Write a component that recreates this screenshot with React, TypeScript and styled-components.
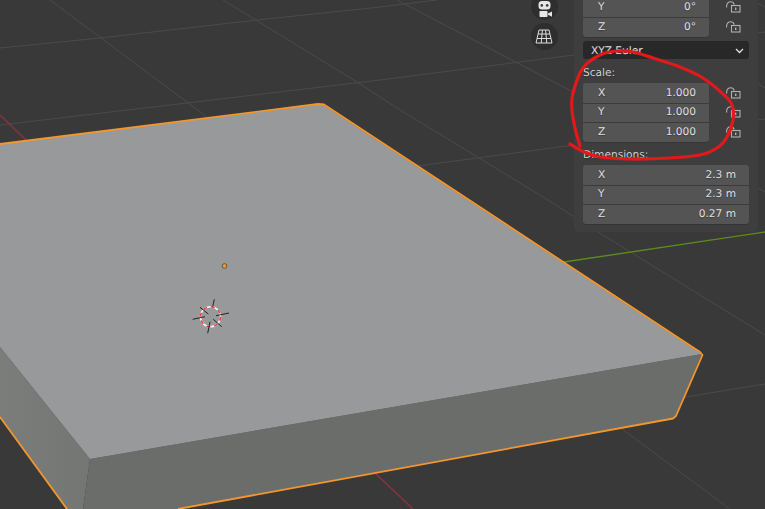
import React from "react";
import styled, { createGlobalStyle } from "styled-components";

const Global = createGlobalStyle`
  html, body { margin: 0; padding: 0; background: #393939; }
  #root { width: 765px; height: 509px; }
`;

const Viewport = styled.div`
  position: relative;
  width: 765px;
  height: 509px;
  overflow: hidden;
  background: #393939;
  font-family: "DejaVu Sans", sans-serif;
  font-size: 10.6px;
  text-rendering: geometricPrecision;
  color: #e0e0e0;
`;

const Scene = styled.svg`
  position: absolute;
  inset: 0;
  display: block;
`;

const Gizmos = styled.div`
  position: absolute;
  left: 530.5px;
  top: -7px;
  display: flex;
  flex-direction: column;
  gap: 3px;
`;

const GizmoButton = styled.div`
  width: 27px;
  height: 27px;
  border-radius: 50%;
  background: #2e2e2e;
  display: flex;
  align-items: center;
  justify-content: center;
`;

const Panel = styled.div`
  position: absolute;
  left: 574px;
  top: 0;
  width: 184px;
  height: 232px;
  padding: 0 9px;
  box-sizing: border-box;
  overflow: hidden;
  background: #3e3e3e;
  border-radius: 0 0 5px 5px;
`;

const FieldStack = styled.div<{ $cut?: boolean }>`
  display: grid;
  grid-template-rows: repeat(${(p) => (p.$cut ? 2 : 3)}, 1fr);
  height: ${(p) => (p.$cut ? 39.7 : 59)}px;
  margin-top: ${(p) => (p.$cut ? -2.7 : 0)}px;
`;

const Row = styled.div`
  display: flex;
  align-items: stretch;
  min-height: 0;
`;

const Field = styled.div<{ $wide?: boolean; $first?: boolean; $last?: boolean }>`
  width: ${(p) => (p.$wide ? 166 : 126)}px;
  min-height: 0;
  box-sizing: border-box;
  display: flex;
  align-items: center;
  justify-content: space-between;
  padding: 0 13px 0 15px;
  background: #545454;
  box-shadow: ${(p) => (p.$first ? "" : "inset 0 1px 0 #3b3b3b")}${(p) => (!p.$first && p.$last ? "," : "")}${(p) => (p.$last ? "0 1px 0 #353535" : "")};
  border-radius: ${(p) => (p.$first ? "3px 3px " : "0 0 ")}${(p) => (p.$last ? "3px 3px" : "0 0")};
  line-height: 12px;
  text-shadow: 0 1px 1px rgba(0, 0, 0, 0.35);
`;

const LockSlot = styled.div`
  display: flex;
  align-items: center;
  padding-left: 17px;
`;

const Dropdown = styled.div`
  margin-top: 4px;
  height: 18px;
  box-sizing: border-box;
  padding: 1px 5px 0 8px;
  border-radius: 3px;
  background: #282828;
  display: flex;
  align-items: center;
  justify-content: space-between;
`;

const SectionLabel = styled.div<{ $h: number }>`
  height: ${(p) => p.$h}px;
  display: flex;
  align-items: flex-end;
  padding-bottom: 4px;
  box-sizing: border-box;
  color: #cfcfcf;
  line-height: 12px;
  text-shadow: 0 1px 1px rgba(0, 0, 0, 0.35);
`;

const Annotation = styled.svg`
  position: absolute;
  inset: 0;
  display: block;
  pointer-events: none;
`;

const LockIcon = () => (
  <svg width="15" height="12" viewBox="0 0 15 12" fill="none">
    <path d="M0.6 6.5V5.2C0.6 2.6 2.6 0.7 4.6 0.7C6.6 0.7 7.8 2 8.2 3.6" stroke="#b0b0b0" strokeWidth="1.1" />
    <rect x="5.5" y="4.5" width="8.5" height="6.5" stroke="#b0b0b0" strokeWidth="1.1" />
    <rect x="9" y="6.6" width="1.4" height="2.4" fill="#b0b0b0" />
  </svg>
);

const CameraIcon = () => (
  <svg width="17" height="18" viewBox="0 0 17 18" style={{ marginTop: 6 }}>
    <rect x="2.5" y="0" width="12" height="8.5" rx="3.5" fill="#e6e6e6" />
    <circle cx="5.8" cy="4.4" r="1.3" fill="#3a3a3a" />
    <circle cx="11.2" cy="4.4" r="1.3" fill="#3a3a3a" />
    <rect x="3.5" y="10" width="8" height="6" rx="0.8" fill="#e6e6e6" />
    <path d="M12 12.6L16 10.6V15.8L12 13.8Z" fill="#e6e6e6" />
  </svg>
);

const PerspectiveIcon = () => (
  <svg width="18" height="15" viewBox="0 0 18 15" fill="none" stroke="#dcdcdc" strokeWidth="1">
    <path d="M4 1H14L17 14H1Z" />
    <path d="M3 5H15M2 9.5H16M7.4 1L6.2 14M10.6 1L11.8 14" />
  </svg>
);

const Chevron = () => (
  <svg width="9" height="6" viewBox="0 0 9 6" fill="none">
    <path d="M1 1L4.5 4.5L8 1" stroke="#e0e0e0" strokeWidth="1.3" />
  </svg>
);

const grid: number[][] = [
  [50, 0, 207, 117],
  [223, 0, 357, 82, 397, 108, 548, 200, 598, 232, 765, 335],
  [397, 0, 573, 92, 765, 192],
  [700, 50, 765, 88],
  [750, -1, 765, 7],
  [0, 48, 100, 38, 257, 20, 380, 7, 437, 0],
  [0, 125, 187, 103, 380, 80, 574, 55, 765, 32],
  [418, 166, 574, 145, 765, 119],
  [685, 397, 765, 384],
  [622, 429, 730, 509],
];

const cursorTicks: number[][] = [
  [214.3, 299.3, 212.7, 306.5],
  [229, 313, 216, 315.7],
  [210, 321.7, 207.7, 333.3],
  [192.7, 319.3, 205, 316.7],
  [200, 307.3, 208.3, 314],
  [213.3, 319.3, 221.7, 326.7],
];

const redPoints: number[][] = [
  [570, 144], [582, 151], [600, 157], [630, 159], [670, 158], [700, 155], [717, 148], [727, 137],
  [733, 120], [732, 105], [723, 94], [703, 78], [680, 67], [653, 58], [633, 52], [617, 51],
  [600, 55], [583, 68], [573, 93], [572, 110], [575, 128], [580, 146],
];

const smoothPath = (pts: number[][]) => {
  let d = `M${pts[0][0]} ${pts[0][1]}`;
  for (let i = 0; i < pts.length - 1; i++) {
    const p0 = pts[Math.max(0, i - 1)];
    const p1 = pts[i];
    const p2 = pts[i + 1];
    const p3 = pts[Math.min(pts.length - 1, i + 2)];
    d += `C${p1[0] + (p2[0] - p0[0]) / 6} ${p1[1] + (p2[1] - p0[1]) / 6} ${p2[0] - (p3[0] - p1[0]) / 6} ${p2[1] - (p3[1] - p1[1]) / 6} ${p2[0]} ${p2[1]}`;
  }
  return d;
};

type Axis = { axis: string; value: string };

const TransformRows = ({ rows, openTop }: { rows: Axis[]; openTop?: boolean }) => (
  <FieldStack $cut={openTop}>
    {rows.map((r, i) => (
      <Row key={r.axis}>
        <Field $first={i === 0 && !openTop} $last={i === rows.length - 1}>
          <span>{r.axis}</span>
          <span>{r.value}</span>
        </Field>
        <LockSlot>
          <LockIcon />
        </LockSlot>
      </Row>
    ))}
  </FieldStack>
);

export default function App() {
  return (
    <Viewport>
      <Global />
      <Scene width="765" height="509" viewBox="0 0 765 509">
        <defs>
          <linearGradient id="leftFace" x1="0" y1="0" x2="1" y2="0">
            <stop offset="0" stopColor="#7b7d7b" />
            <stop offset="1" stopColor="#747674" />
          </linearGradient>
        </defs>
        {grid.map((l, i) => (
          <polyline key={i} points={l.join(" ")} fill="none" stroke="#4b4b4b" strokeWidth="1" />
        ))}
        <line x1="0" y1="115" x2="27" y2="141" stroke="#8a3242" strokeWidth="1.4" />
        <line x1="375" y1="473" x2="413" y2="509" stroke="#8a3242" strokeWidth="1.4" />
        <line x1="564" y1="262" x2="765" y2="232" stroke="#5e8a1f" strokeWidth="1.4" />
        <polygon points="0,347 90,459 83,509 67,509 0,417" fill="url(#leftFace)" />
        <polygon points="90,459 702,354 675,418 178,509 83,509" fill="#6b6d6b" />
        <polygon points="0,144 322,104 702,354 90,459 0,347" fill="#98999a" />
        <polyline
          points="0,144 318,104 324,104.5 700,352 702.5,355 676,416 673,418.5 178,509"
          fill="none"
          stroke="#f5962d"
          strokeWidth="1.8"
          strokeLinejoin="round"
        />
        <line x1="0" y1="417" x2="67" y2="509" stroke="#f5962d" strokeWidth="1.8" />
        <circle cx="224.5" cy="266" r="2.4" fill="#f5962d" stroke="#55504a" strokeWidth="0.9" />
        <circle cx="210.5" cy="316.8" r="10" fill="none" stroke="#f2f2f2" strokeWidth="1.6" />
        <circle
          cx="210.5"
          cy="316.8"
          r="10"
          fill="none"
          stroke="#e8404a"
          strokeWidth="1.6"
          strokeDasharray="3.9 3.95"
        />
        {cursorTicks.map((t, i) => (
          <line key={i} x1={t[0]} y1={t[1]} x2={t[2]} y2={t[3]} stroke="#151515" strokeWidth="0.9" />
        ))}
      </Scene>

      <Gizmos>
        <GizmoButton>
          <CameraIcon />
        </GizmoButton>
        <GizmoButton>
          <PerspectiveIcon />
        </GizmoButton>
      </Gizmos>

      <Panel>
        <TransformRows
          openTop
          rows={[
            { axis: "Y", value: "0°" },
            { axis: "Z", value: "0°" },
          ]}
        />
        <Dropdown>
          <span>XYZ Euler</span>
          <Chevron />
        </Dropdown>
        <SectionLabel $h={24}>Scale:</SectionLabel>
        <TransformRows
          rows={[
            { axis: "X", value: "1.000" },
            { axis: "Y", value: "1.000" },
            { axis: "Z", value: "1.000" },
          ]}
        />
        <SectionLabel $h={23}>Dimensions:</SectionLabel>
        <FieldStack>
          <Field $wide $first>
            <span>X</span>
            <span>2.3 m</span>
          </Field>
          <Field $wide>
            <span>Y</span>
            <span>2.3 m</span>
          </Field>
          <Field $wide $last>
            <span>Z</span>
            <span>0.27 m</span>
          </Field>
        </FieldStack>
      </Panel>

      <Annotation width="765" height="509" viewBox="0 0 765 509">
        <path
          d={smoothPath(redPoints)}
          fill="none"
          stroke="#e2181b"
          strokeWidth="3.2"
          strokeLinecap="round"
          strokeLinejoin="round"
        />
      </Annotation>
    </Viewport>
  );
}
